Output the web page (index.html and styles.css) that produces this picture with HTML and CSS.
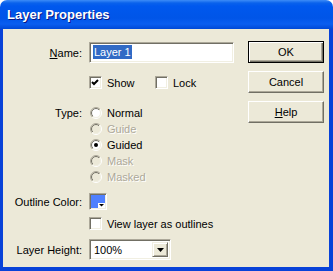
FILE: index.html
```html
<!DOCTYPE html>
<html lang="en">
<head>
    <meta charset="UTF-8">
    <title>Layer Properties</title>
    <link rel="stylesheet" href="styles.css">
</head>
<body>
    <svg class="defs" width="0" height="0">
        <defs>
            <linearGradient id="outer" x1="0" y1="0" x2="1" y2="1">
                <stop offset="50%" stop-color="#aca899"/>
                <stop offset="50%" stop-color="#ffffff"/>
            </linearGradient>
            <linearGradient id="inner" x1="0" y1="0" x2="1" y2="1">
                <stop offset="50%" stop-color="#716f64"/>
                <stop offset="50%" stop-color="#f1efe2"/>
            </linearGradient>
        </defs>
    </svg>

    <div class="window">
        <div class="titlebar"><span class="title">Layer Properties</span></div>
        <div class="frame">
            <div class="form">
                <div class="row row-name">
                    <span class="lbl"><u>N</u>ame:</span>
                    <div class="field"><span class="sel">Layer 1</span></div>
                </div>

                <div class="row row-show">
                    <span class="lbl"></span>
                    <span class="check wide"><i class="box"><svg width="9" height="9"><polyline points="1,4 3,6 7,2" fill="none" stroke="#000" stroke-width="2"/></svg></i>Show</span>
                    <span class="check"><i class="box"></i>Lock</span>
                </div>

                <div class="row row-type">
                    <span class="lbl lbl-top">Type:</span>
                    <div class="radios">
                        <span class="radio"><svg width="12" height="12"><circle cx="6" cy="6" r="5.5" fill="none" stroke="url(#outer)"/><circle cx="6" cy="6" r="4.5" fill="#fff" stroke="url(#inner)"/></svg>Normal</span>
                        <span class="radio off"><svg width="12" height="12"><circle cx="6" cy="6" r="5.5" fill="none" stroke="url(#outer)"/><circle cx="6" cy="6" r="4.5" fill="#ece9d8" stroke="url(#inner)"/></svg>Guide</span>
                        <span class="radio"><svg width="12" height="12"><circle cx="6" cy="6" r="5.5" fill="none" stroke="url(#outer)"/><circle cx="6" cy="6" r="4.5" fill="#fff" stroke="url(#inner)"/><circle cx="6" cy="6" r="2" fill="#000"/></svg>Guided</span>
                        <span class="radio off"><svg width="12" height="12"><circle cx="6" cy="6" r="5.5" fill="none" stroke="url(#outer)"/><circle cx="6" cy="6" r="4.5" fill="#ece9d8" stroke="url(#inner)"/></svg>Mask</span>
                        <span class="radio off"><svg width="12" height="12"><circle cx="6" cy="6" r="5.5" fill="none" stroke="url(#outer)"/><circle cx="6" cy="6" r="4.5" fill="#ece9d8" stroke="url(#inner)"/></svg>Masked</span>
                    </div>
                </div>

                <div class="row row-color">
                    <span class="lbl">Outline Color:</span>
                    <span class="swatch">
                        <svg class="swatch-arrow" width="7" height="5"><rect width="7" height="5" fill="#fff"/><polygon points="1,1 6,1 3.5,3.5" fill="#000"/></svg>
                    </span>
                </div>

                <div class="row row-outline">
                    <span class="lbl"></span>
                    <span class="check"><i class="box"></i>View layer as outlines</span>
                </div>

                <div class="row row-height">
                    <span class="lbl">Layer Height:</span>
                    <div class="select">
                        <span class="select-value">100%</span>
                        <span class="select-btn"><svg width="7" height="4"><polygon points="0,0 7,0 3.5,4" fill="#000"/></svg></span>
                    </div>
                </div>
            </div>

            <div class="buttons">
                <button class="btn default">OK</button>
                <button class="btn">Cancel</button>
                <button class="btn"><u>H</u>elp</button>
            </div>
        </div>
    </div>
</body>
</html>
```

FILE: styles.css
```css
body {
    margin: 0;
    background: #ffffff;
    font-family: "Liberation Sans", Arial, sans-serif;
    font-size: 11px;
    color: #000;
}
.defs {
    position: absolute;
}
.window {
    width: 333px;
    height: 271px;
    display: flex;
    flex-direction: column;
}
.titlebar {
    height: 29px;
    flex: none;
    border-radius: 7px 7px 0 0;
    background: linear-gradient(#3d8cf7 0px, #0a62ec 3px, #0058ee 6px, #0055e8 18px, #0a5ef0 24px, #0048d6 29px);
    display: flex;
    align-items: center;
    padding-left: 7px;
    padding-bottom: 1px;
    box-sizing: border-box;
}
.title {
    color: #fff;
    font-weight: bold;
    font-size: 13px;
    text-shadow: 1px 1px #0a1883;
}
.frame {
    flex: 1;
    display: flex;
    background: #ece9d8;
    border-left: 3px solid #0842d8;
    border-right: 4px solid #0842d8;
    border-bottom: 4px solid #0842d8;
}
.form {
    padding-top: 13px;
    display: flex;
    flex-direction: column;
}
.row {
    display: flex;
    align-items: center;
}
.lbl {
    width: 79px;
    margin-right: 7px;
    text-align: right;
    flex: none;
}
.lbl-top {
    align-self: flex-start;
    line-height: 16px;
}
.field {
    width: 145px;
    height: 21px;
    box-sizing: border-box;
    background: #fff;
    border-top: 1px solid #aca899;
    border-left: 1px solid #aca899;
    border-right: 1px solid #fff;
    border-bottom: 1px solid #fff;
    box-shadow: inset 1px 1px #716f64, inset -1px -1px #f1efe2;
    padding: 3px 0 0 3px;
}
.sel {
    background: #316ac5;
    color: #fff;
    padding: 1px 1px;
}
.row-show {
    margin-top: 13px;
}
.check {
    display: flex;
    align-items: center;
    height: 13px;
}
.check.wide {
    width: 66px;
}
.box {
    width: 13px;
    height: 13px;
    box-sizing: border-box;
    margin-right: 5px;
    background: #fff;
    border-top: 1px solid #aca899;
    border-left: 1px solid #aca899;
    border-right: 1px solid #fff;
    border-bottom: 1px solid #fff;
    box-shadow: inset 1px 1px #716f64, inset -1px -1px #f1efe2;
    padding: 1px;
    display: flex;
}
.row-type {
    margin-top: 16px;
    align-items: flex-start;
}
.radios {
    display: flex;
    flex-direction: column;
    margin-left: 1px;
}
.radio {
    display: flex;
    align-items: center;
    height: 16px;
}
.radio svg {
    margin-right: 5px;
}
.radio.off {
    color: #aca899;
    text-shadow: 1px 1px #fff;
}
.row-color {
    margin-top: 8px;
}
.swatch {
    position: relative;
    width: 18px;
    height: 17px;
    box-sizing: border-box;
    background: #4f80ff;
    border-top: 1px solid #aca899;
    border-left: 1px solid #aca899;
    border-right: 1px solid #fff;
    border-bottom: 1px solid #fff;
    box-shadow: inset 1px 1px #716f64, inset -1px -1px #f1efe2;
}
.swatch-arrow {
    position: absolute;
    right: 1px;
    bottom: 1px;
}
.row-outline {
    margin-top: 7px;
}
.row-height {
    margin-top: 9px;
}
.select {
    width: 82px;
    height: 21px;
    box-sizing: border-box;
    background: #fff;
    border-top: 1px solid #aca899;
    border-left: 1px solid #aca899;
    border-right: 1px solid #fff;
    border-bottom: 1px solid #fff;
    box-shadow: inset 1px 1px #716f64, inset -1px -1px #f1efe2;
    padding: 2px;
    display: flex;
    align-items: center;
}
.select-value {
    flex: 1;
    padding-left: 2px;
}
.select-btn {
    width: 16px;
    height: 15px;
    box-sizing: border-box;
    background: #ece9d8;
    border-top: 1px solid #f1efe2;
    border-left: 1px solid #f1efe2;
    border-right: 1px solid #716f64;
    border-bottom: 1px solid #716f64;
    box-shadow: inset 1px 1px #fff, inset -1px -1px #aca899;
    display: flex;
    align-items: center;
    justify-content: center;
}
.buttons {
    margin-left: auto;
    margin-right: 5px;
    padding-top: 12px;
    display: flex;
    flex-direction: column;
    gap: 8px;
}
.btn {
    width: 76px;
    height: 22px;
    box-sizing: border-box;
    font-family: "Liberation Sans", Arial, sans-serif;
    font-size: 11px;
    color: #000;
    background: #ece9d8;
    border-top: 1px solid #fff;
    border-left: 1px solid #fff;
    border-right: 1px solid #716f64;
    border-bottom: 1px solid #716f64;
    box-shadow: inset -1px -1px #aca899;
    padding: 0;
}
.btn.default {
    border: 1px solid #000;
    box-shadow: inset 1px 1px #fff, inset -1px -1px #716f64, inset -2px -2px #aca899;
}
```
